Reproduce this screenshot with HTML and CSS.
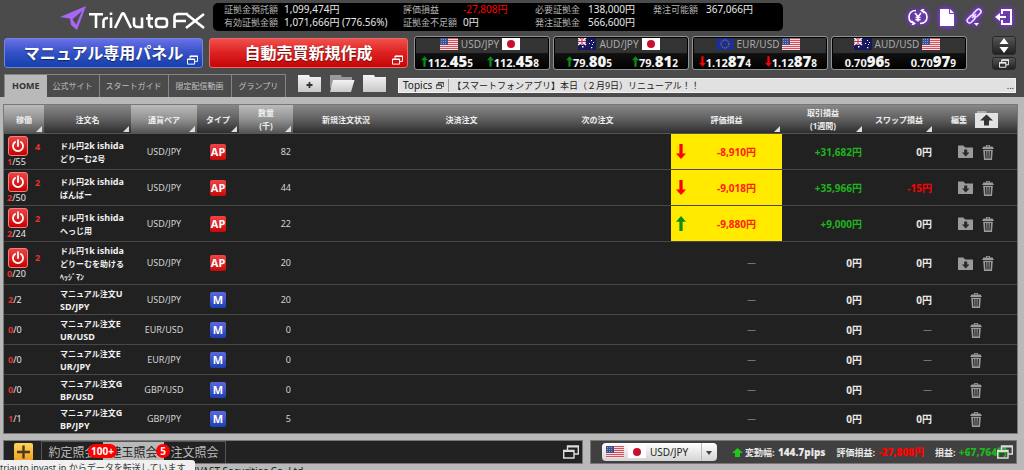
FILE: index.html
```html
<!DOCTYPE html>
<html lang="ja">
<head>
<meta charset="utf-8">
<title>TriAuto FX</title>
<link rel="stylesheet" href="styles.css">
</head>
<body>
<svg class="defs" aria-hidden="true">
  <defs>
    <linearGradient id="white-grad" x1="0" y1="0" x2="0" y2="1"><stop offset="0" stop-color="#f4f4f4"/><stop offset="1" stop-color="#c9c9c9"/></linearGradient>
  </defs>
  <symbol id="us" viewBox="0 0 18 12"><path fill="#f3dfe0" d="M0 0h18v12H0z"/><path stroke="#d9505c" d="M0 .5h18M0 2.5h18M0 4.5h18M0 6.5h18M0 8.5h18M0 10.5h18"/><path fill="#3d4f8c" d="M0 0h8v7H0z"/><path stroke="#8d99c4" stroke-dasharray="1 1" d="M1 1.5h6M1 3.5h6M1 5.5h6"/></symbol>
  <symbol id="jp" viewBox="0 0 18 12"><path fill="#fff" d="M0 0h18v12H0z"/><circle cx="9" cy="6" r="4" fill="#c8102e"/></symbol>
  <symbol id="au" viewBox="0 0 18 12"><path fill="#16175c" d="M0 0h18v12H0z"/><path stroke="#fff" stroke-width="1.6" d="M0 0l8 7M8 0L0 7"/><path stroke="#fff" stroke-width="2.6" d="M4 0v7M0 3.5h8"/><path stroke="#d5233b" stroke-width="1.2" d="M4 0v7M0 3.5h8"/><path fill="#fff" d="M4 8h1.5v1.5H4zM13 2h1v1h-1zM11 5h1v1h-1zM15 4h1v1h-1zM13 9h1.3v1.3H13zM14 6h1v1h-1z"/></symbol>
  <symbol id="eu" viewBox="0 0 18 12"><path fill="#1f2f8f" d="M0 0h18v12H0z"/><circle cx="9" cy="6" r="4" fill="none" stroke="#b5a955" stroke-width="1" stroke-dasharray="1 1.1"/></symbol>
  <symbol id="up" viewBox="0 0 8 12"><path fill="currentColor" d="M4 0l4 4.5H5.3V12H2.7V4.500H0z"/></symbol>
  <symbol id="down" viewBox="0 0 8 12"><path fill="currentColor" d="M4 12l4-4.500H5.300V0H2.700v7.500H0z"/></symbol>
  <symbol id="win" viewBox="0 0 16 14"><path fill="none" stroke="currentColor" stroke-width="1.400" d="M4.500 5V1h10.800v8H11M.7 5.500H11v7.500H.7z"/><path stroke="currentColor" stroke-width="1.600" d="M4 1.800h11.500M.7 6.300H11"/></symbol>
  <symbol id="power" viewBox="0 0 20 20"><path fill="none" stroke="#fff" stroke-width="2" stroke-linecap="round" d="M6.800 5.500a5.600 5.600 0 1 0 6.400 0M10 3.500v6.500"/></symbol>
  <symbol id="trash" viewBox="0 0 12 16"><path fill="#9c9c9c" d="M4 2.500V1h4v1.500h2.500L12 5H0l1.500-2.500zM4.800 2.500h2.400V1.800H4.800zM1.200 5.800h9.600L10 16H2z"/><path stroke="#222" stroke-width="1.200" d="M3.600 7l.4 7.500M6 7v7.500M8.400 7L8 14.500"/></symbol>
  <symbol id="folder-in" viewBox="0 0 15 13"><path fill="#9a9a9a" d="M0 .5h5.500L7 2.500h8V13H0z"/><path fill="#2a2a2a" d="M6.200 4.500h3V7.500H11.500L7.700 11.500 4 7.500h2.200z"/></symbol>
</svg>

<header class="top">
  <div class="row-brand">
    <svg class="logo" viewBox="0 0 148 26" role="img" aria-label="TriAuto FX">
      <path fill="#a866f5" fill-rule="evenodd" d="M0 13L26 2l-9 24-6-5-1-6.500zM12.500 15.200l3.700 5.500L22 7z"/>
      <g fill="none" stroke="#fff" stroke-width="2.600">
        <path d="M29 10.200h14M36 10v14M43.500 24v-7q0-3 4.500-3M51 13.500V24M51 8.500v2.500M55 24l7-14q1-1.500 2 0l7 14M74 13.500v6q0 3.500 4 3.500h4v-9.500M89 10v10q0 3 4 3M86 14.500h7M99 14.500h5q3 0 3 3v2.500q0 3-3 3h-5q-3 0-3-3v-2.500q0-3 3-3z"/>
        <path d="M114.500 24V13q0-3 3-3H128M115 17h11M127 10.500l17 13.500M144 10l-18 14"/>
      </g>
    </svg>
    <dl class="account">
      <div class="pair"><dt>証拠金預託額</dt><dd>1,099,474円</dd></div>
      <div class="pair"><dt>評価損益</dt><dd class="neg">-27,808円</dd></div>
      <div class="pair short"><dt>必要証拠金</dt><dd>138,000円</dd></div>
      <div class="pair short"><dt>発注可能額</dt><dd>367,066円</dd></div>
      <div class="pair"><dt>有効証拠金額</dt><dd>1,071,666円 (776.56%)</dd></div>
      <div class="pair"><dt>証拠金不足額</dt><dd>0円</dd></div>
      <div class="pair short"><dt>発注証拠金</dt><dd>566,600円</dd></div>
    </dl>
    <div class="tools">
      <button type="button" aria-label="振替"><svg width="20" height="16" viewBox="0 0 20 16"><path fill="none" stroke="#fff" stroke-width="1.600" d="M8 1.500C3.500 1.500 1 4 1 8s2 5.500 5 6M12 14.500c4.500 0 7-2.500 7-6.500s-2-5.500-5-6M3.500 12l3 2.500L4 16M16.500 4l-3-2.500L16 0"/><path fill="none" stroke="#fff" stroke-width="1.500" d="M7 4l3 4 3-4M10 8v4.500M7.500 8.500h5M7.500 10.700h5"/></svg></button>
      <button type="button" aria-label="書類"><svg width="14" height="17" viewBox="0 0 14 17"><path fill="#fff" d="M0 0h9v5h5v12H0zM10 0l4 4h-4z"/></svg></button>
      <button type="button" aria-label="リンク"><svg width="17" height="18" viewBox="0 0 17 18"><g fill="none" stroke="#eadcff" stroke-width="1.700"><rect x="-4.500" y="-2.300" width="9" height="4.800" rx="2.400" transform="translate(11 5) rotate(-45)"/><rect x="-4.500" y="-2.300" width="9" height="4.800" rx="2.400" transform="translate(5 11) rotate(-45)"/><path d="M6 10l4-4"/></g><path fill="#fff" d="M8 15h5l-2.500 3z"/></svg></button>
      <button type="button" aria-label="ログアウト"><svg width="17" height="16" viewBox="0 0 17 16"><path fill="none" stroke="#fff" stroke-width="2" d="M7 5V1h9v14H7v-4"/><path fill="#fff" d="M0 8l5-4v3h6v2H5v3z"/></svg></button>
    </div>
  </div>

  <div class="row-main">
    <button type="button" class="big blue">マニュアル専用パネル<svg class="pop"><use href="#win"/></svg></button>
    <button type="button" class="big red">自動売買新規作成<svg class="pop"><use href="#win"/></svg></button>
    <div class="tickers">
      <section class="ticker">
        <h2><svg class="flag"><use href="#us"/></svg>USD/JPY<svg class="flag"><use href="#jp"/></svg></h2>
        <p><span class="price"><svg class="tick green"><use href="#up"/></svg>112.<b>45</b><small>5</small></span><span class="price"><svg class="tick green"><use href="#up"/></svg>112.<b>45</b><small>8</small></span></p>
      </section>
      <section class="ticker">
        <h2><svg class="flag"><use href="#au"/></svg>AUD/JPY<svg class="flag"><use href="#jp"/></svg></h2>
        <p><span class="price"><svg class="tick green"><use href="#up"/></svg>79.<b>80</b><small>5</small></span><span class="price"><svg class="tick green"><use href="#up"/></svg>79.<b>81</b><small>2</small></span></p>
      </section>
      <section class="ticker">
        <h2><svg class="flag"><use href="#eu"/></svg>EUR/USD<svg class="flag"><use href="#us"/></svg></h2>
        <p><span class="price"><svg class="tick red-ink"><use href="#down"/></svg>1.12<b>87</b><small>4</small></span><span class="price"><svg class="tick red-ink"><use href="#down"/></svg>1.12<b>87</b><small>8</small></span></p>
      </section>
      <section class="ticker">
        <h2><svg class="flag"><use href="#au"/></svg>AUD/USD<svg class="flag"><use href="#us"/></svg></h2>
        <p><span class="price">0.70<b>96</b><small>5</small></span><span class="price">0.70<b>97</b><small>9</small></span></p>
      </section>
    </div>
    <div class="stepper">
      <button type="button" aria-label="上下"><svg width="10" height="15" viewBox="0 0 10 15"><path fill="#fff" d="M5 0l4.500 6h-9zM.5 9h9L5 15z"/></svg></button>
      <button type="button" aria-label="別画面"><svg width="10" height="9"><use href="#win"/></svg></button>
    </div>
  </div>

  <div class="row-tabs">
    <nav class="tabs">
      <a href="#" class="on">HOME</a><a href="#">公式サイト</a><a href="#">スタートガイド</a><a href="#">限定配信動画</a><a href="#">グランプリ</a>
    </nav>
    <div class="folders">
      <button type="button" aria-label="フォルダ追加"><svg width="23" height="17" viewBox="0 0 23 17"><path fill="url(#white-grad)" d="M0 0h11l1 2h11v15H0z"/><path stroke="#333" stroke-width="1.800" d="M11.500 7v6M8.500 10h6"/></svg></button>
      <button type="button" aria-label="フォルダを開く"><svg width="26" height="17" viewBox="0 0 26 17"><path fill="#999" d="M1 0h11l1 2h10v6L4 16 1 12z"/><path fill="url(#white-grad)" d="M4 5h21.500L22 17H1z"/></svg></button>
      <button type="button" aria-label="フォルダ"><svg width="23" height="17" viewBox="0 0 23 17"><path fill="url(#white-grad)" d="M0 0h11l1 2h11v15H0z"/></svg></button>
    </div>
    <div class="topics">
      <span class="topics-label">Topics <svg width="8" height="7"><use href="#win"/></svg></span>
      <a href="#">【スマートフォンアプリ】本日（２月9日）リニューアル！！</a>
      <span class="more">...</span>
    </div>
  </div>
</header>

<main class="board">
  <table class="orders">
    <colgroup><col class="c-run"><col class="c-name"><col class="c-pair"><col class="c-type"><col class="c-qty"><col class="c-new"><col class="c-close"><col class="c-next"><col class="c-val"><col class="c-trade"><col class="c-swap"><col class="c-edit"></colgroup>
    <thead>
      <tr>
        <th class="lit sort">稼働</th><th class="sort">注文名</th><th class="lit sort">通貨ペア</th><th class="sort">タイプ</th><th class="lit sort">数量<br>(千)</th><th>新規注文状況</th><th>決済注文</th><th>次の注文</th><th class="sort">評価損益</th><th class="sort">取引損益<br>(1週間)</th><th class="sort">スワップ損益</th>
        <th><div class="edit-head">編集<button type="button" aria-label="フォルダから出す"><svg width="23" height="17" viewBox="0 0 23 17"><path fill="#aaa" d="M2 0h9l1 2h9v3H2z"/><path fill="#e2e2e2" d="M0 2h23v15H0z"/><path fill="#333" d="M11.500 3.500l6.500 6h-4v5H9v-5H5z"/></svg></button></div></th>
      </tr>
    </thead>
    <tbody>
      <tr class="mid">
        <td><div class="run"><button type="button" class="power" aria-label="稼働"><svg><use href="#power"/></svg></button><b>4</b><span><b>1</b>/55</span></div></td>
        <td class="name">ドル円<span class="en">2k ishida</span><br>どりーむ<span class="en">2</span>号</td><td class="pair-cell">USD/JPY</td><td class="type"><span class="chip ap">AP</span></td><td class="num">82</td><td></td><td></td><td></td>
        <td class="hot"><div><svg class="neg"><use href="#down"/></svg><span>-8,910円</span></div></td><td class="money pos">+31,682円</td><td class="money">0円</td>
        <td><div class="actions"><button type="button" aria-label="フォルダへ"><svg class="fold"><use href="#folder-in"/></svg></button><button type="button" aria-label="削除"><svg class="bin"><use href="#trash"/></svg></button></div></td>
      </tr>
      <tr class="mid">
        <td><div class="run"><button type="button" class="power" aria-label="稼働"><svg><use href="#power"/></svg></button><b>2</b><span><b>2</b>/50</span></div></td>
        <td class="name">ドル円<span class="en">2k ishida</span><br>ばんばー</td><td class="pair-cell">USD/JPY</td><td class="type"><span class="chip ap">AP</span></td><td class="num">44</td><td></td><td></td><td></td>
        <td class="hot"><div><svg class="neg"><use href="#down"/></svg><span>-9,018円</span></div></td><td class="money pos">+35,966円</td><td class="money neg">-15円</td>
        <td><div class="actions"><button type="button" aria-label="フォルダへ"><svg class="fold"><use href="#folder-in"/></svg></button><button type="button" aria-label="削除"><svg class="bin"><use href="#trash"/></svg></button></div></td>
      </tr>
      <tr class="mid">
        <td><div class="run"><button type="button" class="power" aria-label="稼働"><svg><use href="#power"/></svg></button><b>2</b><span><b>2</b>/24</span></div></td>
        <td class="name">ドル円<span class="en">1k ishida</span><br>へっじ用</td><td class="pair-cell">USD/JPY</td><td class="type"><span class="chip ap">AP</span></td><td class="num">22</td><td></td><td></td><td></td>
        <td class="hot"><div><svg class="green"><use href="#up"/></svg><span>-9,880円</span></div></td><td class="money pos">+9,000円</td><td class="money">0円</td>
        <td><div class="actions"><button type="button" aria-label="フォルダへ"><svg class="fold"><use href="#folder-in"/></svg></button><button type="button" aria-label="削除"><svg class="bin"><use href="#trash"/></svg></button></div></td>
      </tr>
      <tr class="tall">
        <td><div class="run"><button type="button" class="power" aria-label="稼働"><svg><use href="#power"/></svg></button><b>2</b><span><b>0</b>/20</span></div></td>
        <td class="name">ドル円<span class="en">1k ishida</span><br>どりーむを助ける<br>ﾍｯｼﾞﾏﾝ</td><td class="pair-cell">USD/JPY</td><td class="type"><span class="chip ap">AP</span></td><td class="num">20</td><td></td><td></td><td></td>
        <td class="dash">―</td><td class="money">0円</td><td class="money">0円</td>
        <td><div class="actions"><button type="button" aria-label="フォルダへ"><svg class="fold"><use href="#folder-in"/></svg></button><button type="button" aria-label="削除"><svg class="bin"><use href="#trash"/></svg></button></div></td>
      </tr>
      <tr>
        <td class="ratio"><b>2</b>/2</td><td class="name">マニュアル注文<span class="en">U<br>SD/JPY</span></td><td class="pair-cell">USD/JPY</td><td class="type"><span class="chip m">M</span></td><td class="num">20</td><td></td><td></td><td></td><td class="dash">―</td><td class="money">0円</td><td class="money">0円</td>
        <td><div class="actions"><button type="button" aria-label="削除"><svg class="bin"><use href="#trash"/></svg></button></div></td>
      </tr>
      <tr>
        <td class="ratio"><b>0</b>/0</td><td class="name">マニュアル注文<span class="en">E<br>UR/USD</span></td><td class="pair-cell">EUR/USD</td><td class="type"><span class="chip m">M</span></td><td class="num">0</td><td></td><td></td><td></td><td class="dash">―</td><td class="money">0円</td><td class="none">―</td>
        <td><div class="actions"><button type="button" aria-label="削除"><svg class="bin"><use href="#trash"/></svg></button></div></td>
      </tr>
      <tr>
        <td class="ratio"><b>0</b>/0</td><td class="name">マニュアル注文<span class="en">E<br>UR/JPY</span></td><td class="pair-cell">EUR/JPY</td><td class="type"><span class="chip m">M</span></td><td class="num">0</td><td></td><td></td><td></td><td class="dash">―</td><td class="money">0円</td><td class="none">―</td>
        <td><div class="actions"><button type="button" aria-label="削除"><svg class="bin"><use href="#trash"/></svg></button></div></td>
      </tr>
      <tr>
        <td class="ratio"><b>0</b>/0</td><td class="name">マニュアル注文<span class="en">G<br>BP/USD</span></td><td class="pair-cell">GBP/USD</td><td class="type"><span class="chip m">M</span></td><td class="num">0</td><td></td><td></td><td></td><td class="dash">―</td><td class="money">0円</td><td class="none">―</td>
        <td><div class="actions"><button type="button" aria-label="削除"><svg class="bin"><use href="#trash"/></svg></button></div></td>
      </tr>
      <tr>
        <td class="ratio"><b>1</b>/1</td><td class="name">マニュアル注文<span class="en">G<br>BP/JPY</span></td><td class="pair-cell">GBP/JPY</td><td class="type"><span class="chip m">M</span></td><td class="num">5</td><td></td><td></td><td></td><td class="dash">―</td><td class="money">0円</td><td class="money">0円</td>
        <td><div class="actions"><button type="button" aria-label="削除"><svg class="bin"><use href="#trash"/></svg></button></div></td>
      </tr>
    </tbody>
  </table>
</main>

<div class="panels">
  <section class="panel inquiry">
    <button type="button" class="add" aria-label="追加"><svg width="19" height="18" viewBox="0 0 19 18"><path stroke="#4a3a1c" stroke-width="2.400" d="M9.500 2.500v13M3 9h13"/></svg></button>
    <nav class="subtabs">
      <a href="#">約定照会<span class="badge">100+</span></a><a href="#" class="on">建玉照会<span class="badge">5</span></a><a href="#">注文照会</a>
    </nav>
    <button type="button" class="expand" aria-label="別画面"><svg width="16" height="14"><use href="#win"/></svg></button>
  </section>
  <section class="panel summary">
    <div class="picker">
      <svg class="flag"><use href="#us"/></svg><svg class="flag"><use href="#jp"/></svg>
      <select aria-label="通貨ペア"><option>USD/JPY</option></select>
      <span class="caret"></span>
    </div>
    <div class="stats">
      <svg width="11" height="9" viewBox="0 0 11 9"><path fill="#1ec81e" d="M5.500 0L11 5H8v4H3V5H0z"/></svg>
      <span>変動幅: <b>144.7pips</b></span>
      <span>評価損益: <b class="neg">-27,808円</b></span>
      <span>損益: <b class="pos">+67,764円</b></span>
    </div>
    <button type="button" class="expand over" aria-label="別画面"><svg width="16" height="14"><use href="#win"/></svg></button>
  </section>
</div>
<footer class="copy">© INVAST Securities Co.,Ltd.</footer>
<div class="status">triauto.invast.jp からデータを転送しています</div>
</body>
</html>
```

FILE: styles.css
```css
* { box-sizing: border-box; }
body {
  margin: 0;
  height: 100vh;
  overflow: hidden;
  position: relative;
  background: #b9b9b9;
  color: #e8e8e8;
  font: 10px/12px "Noto Sans", "Noto Sans CJK JP", sans-serif;
}
.defs { position: absolute; width: 0; height: 0; }
button { border: 0; padding: 0; margin: 0; background: none; color: inherit; font: inherit; display: block; }
svg { display: block; flex: none; }
a { color: inherit; text-decoration: none; }
h2, p, dl, dd { margin: 0; }
.neg { color: #f00; }
.pos { color: #1eb41e; }
.green { color: #0a8f14; }
.red-ink { color: #f00; }

/* Header */
.top { background: #4b4b4b; padding: 3px 8px 0 4px; }
.row-brand { display: flex; align-items: flex-start; height: 33px; }
.logo { width: 148px; height: 26px; margin: 1px 5px 0 56px; }
.account {
  display: grid;
  grid-template-columns: 179px 132px 118px 118px;
  align-content: start;
  width: 570px;
  padding: 0 0 2px 11px;
  background: #000;
  border-radius: 5px;
}
.pair { display: flex; line-height: 13px; white-space: nowrap; }
.pair dt { width: 60px; font-size: 9px; color: #b4b4b4; }
.pair.short dt { width: 53px; }
.tools { display: flex; align-items: center; gap: 12px; margin: 5px 4px 0 auto; }
.tools svg { filter: drop-shadow(0 0 2px #8a3cf0) drop-shadow(0 0 2px #7428d8); }

.row-main { display: flex; align-items: center; }
.big {
  position: relative;
  flex: 0 1 199px;
  height: 30px;
  margin-right: 6px;
  border-radius: 3px;
  color: #fff;
  font-size: 16px;
  font-weight: bold;
  line-height: 28px;
  white-space: nowrap;
  text-shadow: 0 1px 1px rgba(0, 0, 0, .5);
}
.blue { background: linear-gradient(#6a70e8, #3350c4 50%, #1440ac); border: 1px solid #6f86dc; }
.red { background: linear-gradient(#f0504c, #dc2020 50%, #c60606); border: 1px solid #ec6a66; }
.pop { position: absolute; right: 4px; bottom: 2px; width: 11px; height: 10px; }
.tickers { display: grid; grid-template-columns: repeat(4, 1fr); gap: 3px; flex: 0 1 553px; }
.ticker {
  height: 34px;
  border: 1px solid #929292;
  border-radius: 3px;
  box-shadow: inset 0 0 0 1px #000;
  background: linear-gradient(#333 0, #333 48%, #111 52%, #000);
  overflow: hidden;
}
.ticker h2 { display: flex; justify-content: center; gap: 3px; font-size: 10px; font-weight: normal; line-height: 12px; color: #aaa; padding: 1px 4px 0 0; }
.flag { width: 18px; height: 12px; }
.ticker p { display: flex; padding: 2px 10px 0 0; }
.price { display: flex; align-items: baseline; justify-content: flex-end; flex: 1; font-size: 11px; font-weight: bold; line-height: 18px; color: #f4f4f4; }
.price + .price { flex: 0 0 66px; }
.price b { font-size: 15px; }
.price small { font-size: 10px; }
.tick { width: 7px; height: 11px; }
.stepper { margin-left: auto; display: grid; gap: 2px; }
.stepper button { display: flex; align-items: center; justify-content: center; width: 24px; height: 19px; border: 1px solid #2a2a2a; border-radius: 3px; background: linear-gradient(#555, #222); color: #fff; }
.stepper button + button { height: 13px; }

.row-tabs { display: flex; align-items: flex-end; margin-top: 4px; height: 23px; }
.tabs { display: flex; border: 1px solid #858585; border-bottom: 0; }
.tabs a { padding: 0 6px; font-size: 8px; line-height: 22px; color: #c0c0c0; border-right: 1px solid #858585; white-space: nowrap; }
.tabs a:nth-child(n+4) { padding: 0 7px; }
.tabs a:last-child { border-right: 0; }
.tabs .on { background: #b9b9b9; color: #333; font-weight: bold; font-size: 9px; padding: 0 7px; border: 0; }
.folders { display: flex; align-self: flex-start; gap: 8px; margin: 1px 12px 0 auto; }
.topics { display: flex; align-items: center; height: 15px; margin-bottom: 4px; flex: 0 1 618px; background: #e1e1e1; color: #222; border: 1px solid #f2f2f2; font-size: 9px; line-height: 13px; }
.topics-label { display: flex; align-items: center; gap: 4px; padding: 0 4px; margin-right: 3px; border-right: 1px solid #999; font-size: 10px; }
.topics a { white-space: nowrap; }
.more { margin-left: auto; padding-right: 1px; }

/* Order table */
.board { margin: 7px 6px 0 3px; border: 1px solid #777; background: #212121; }
.orders { width: 100%; table-layout: fixed; border-collapse: separate; border-spacing: 0; }
.c-run { width: 40px; } .c-name { width: 87px; } .c-pair { width: 66px; } .c-type { width: 42px; }
.c-qty { width: 54px; } .c-new { width: 106px; } .c-close { width: 125px; } .c-next { width: 147px; }
.c-val { width: 111px; } .c-trade { width: 82px; } .c-swap { width: 70px; } .c-edit { width: 83px; }
.orders th { position: relative; height: 29px; padding: 0; background: linear-gradient(#888, #606060 50%, #2e2e2e); font-size: 8px; line-height: 13px; color: #eee; border-bottom: 1px solid #555; }
.orders th.lit { background: linear-gradient(#bbb, #929292 50%, #555); }
.sort::after { content: ""; position: absolute; right: 2px; bottom: 1px; border: 3px solid; border-color: transparent #ddd #ddd transparent; }
.edit-head { display: flex; align-items: center; gap: 8px; padding-left: 17px; }
.orders td { height: 30px; padding: 0; border-bottom: 1px solid #474747; }
.orders .mid td { height: 36px; }
.orders .tall td { height: 43px; }
.orders tbody tr:last-child td { height: 28px; border-bottom: 0; }
.run { display: grid; grid-template-columns: 20px 9px; column-gap: 7px; padding-left: 4px; align-items: center; font-size: 9px; line-height: 11px; }
.run > span { margin-left: -1px; }
.run b, .ratio b { color: #e8322c; }
.power { width: 20px; height: 20px; border: 1px solid #f08080; border-radius: 3px; background: linear-gradient(#ee4444, #c80000); }
.power svg { width: 18px; height: 18px; }
.orders .ratio { padding-left: 4px; font-size: 9px; }
.orders .name { padding-left: 16px; font-size: 8px; font-weight: bold; line-height: 13px; color: #f0f0f0; white-space: nowrap; }
.en { font-size: 9px; }
.pair-cell, .type { text-align: center; }
.orders .pair-cell { font-size: 9px; color: #d4d4d4; }
.chip { display: inline-block; width: 16px; height: 16px; border-radius: 2px; color: #fff; font-size: 11px; line-height: 16px; font-weight: bold; vertical-align: middle; }
.ap { background: linear-gradient(#f04444, #c80808); }
.m { background: linear-gradient(#5c68e0, #1c40b4); }
.orders .num { text-align: right; padding-right: 2px; font-size: 9px; color: #d4d4d4; }
.hot { background: #ffea00; color: #ff2010; font-weight: bold; }
.hot div { display: flex; align-items: center; justify-content: space-between; padding: 0 26px 0 5px; }
.hot svg { width: 10px; height: 15px; }
.orders .money, .orders .none { text-align: right; padding-right: 2px; font-weight: bold; font-size: 10px; }
.orders .none { color: #aaa; font-weight: normal; font-size: 9px; }
.orders .dash { text-align: right; padding-right: 26px; color: #aaa; font-size: 9px; }
.actions { display: flex; align-items: center; justify-content: center; gap: 9px; }
.fold { width: 15px; height: 13px; }
.bin { width: 12px; height: 16px; }

/* Bottom panels */
.panels { display: grid; grid-template-columns: 580fr 427fr; gap: 7px; margin: 6px 7px 0 3px; }
.panel { position: relative; display: flex; align-items: center; height: 24px; border: 1px solid #777; background: #222; }
.inquiry { padding-left: 10px; }
.add { width: 19px; height: 18px; border-radius: 2px; background: linear-gradient(#ffd45c, #f0a020); }
.subtabs { display: flex; margin-left: 8px; align-self: stretch; border: 1px solid #555; border-bottom: 0; }
.subtabs a { position: relative; width: 61px; font-size: 12px; line-height: 22px; text-align: center; white-space: nowrap; color: #bbb; }
.subtabs .on { background: #b9b9b9; color: #222; }
.badge { position: absolute; z-index: 1; top: 2px; right: -14px; padding: 0 3px; border-radius: 7px; background: #f00; color: #fff; font-size: 10px; font-weight: bold; line-height: 14px; }
.on .badge { right: -6px; padding: 0 4px; }
.expand { margin: 0 3px 0 auto; color: #ddd; }
.summary { background: #404040; padding-left: 11px; }
.picker { display: flex; align-items: center; position: relative; gap: 4px; padding-left: 4px; width: 115px; height: 18px; border-radius: 4px; background: linear-gradient(#fff, #d4d4d4); }
.picker select { flex: 1; min-width: 0; height: 18px; border: 0; padding: 0; appearance: none; background: none; color: #222; font: inherit; font-size: 10px; }
.caret { position: absolute; right: 0; top: 0; width: 16px; height: 18px; border-left: 1px solid #bbb; pointer-events: none; }
.caret::after { content: ""; position: absolute; left: 4px; top: 8px; border: 3px solid transparent; border-top: 4px solid #444; }
.stats { display: flex; align-items: center; gap: 11px; margin-left: 15px; white-space: nowrap; font-size: 9px; font-weight: bold; }
.stats svg { margin-right: -9px; }
.stats b { font-size: 10px; margin-left: 1px; }
.over { position: absolute; right: 3px; top: 4px; margin: 0; }
.copy { padding: 1px 0 0 175px; font-size: 10px; color: #222; }
.status { position: absolute; left: 0; bottom: -6px; width: 195px; height: 16px; padding-top: 2px; background: #f0f0f0; color: #333; font-size: 9px; line-height: 12px; white-space: nowrap; border-radius: 0 3px 0 0; }
```
